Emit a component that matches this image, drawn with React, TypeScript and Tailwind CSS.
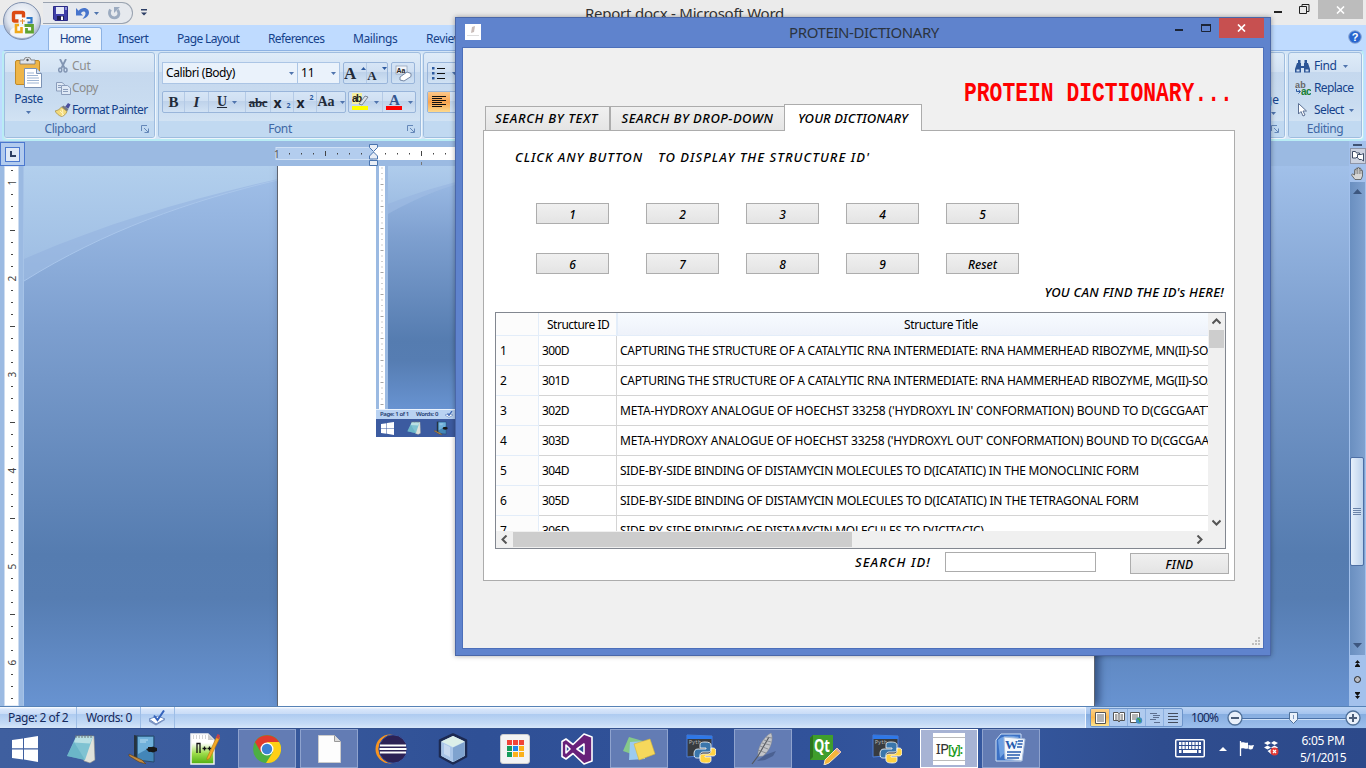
import React from "react";

type Kids = { children?: React.ReactNode };

const rows: [string, string, string][] = [
  ["300D", "CAPTURING THE STRUCTURE OF A CATALYTIC RNA INTERMEDIATE: RNA HAMMERHEAD RIBOZYME, MN(II)-SOAKED", "tracking-[-0.26px]"],
  ["301D", "CAPTURING THE STRUCTURE OF A CATALYTIC RNA INTERMEDIATE: RNA HAMMERHEAD RIBOZYME, MG(II)-SOAKED", "tracking-[-0.26px]"],
  ["302D", "META-HYDROXY ANALOGUE OF HOECHST 33258 ('HYDROXYL IN' CONFORMATION) BOUND TO D(CGCGAATTCGCG)2", "tracking-[-0.14px]"],
  ["303D", "META-HYDROXY ANALOGUE OF HOECHST 33258 ('HYDROXYL OUT' CONFORMATION) BOUND TO D(CGCGAATTCGCG)2", "tracking-[-0.17px]"],
  ["304D", "SIDE-BY-SIDE BINDING OF DISTAMYCIN MOLECULES TO D(ICATATIC) IN THE MONOCLINIC FORM", "tracking-[-0.272px]"],
  ["305D", "SIDE-BY-SIDE BINDING OF DISTAMYCIN MOLECULES TO D(ICATATIC) IN THE TETRAGONAL FORM", "tracking-[-0.26px]"],
  ["306D", "SIDE-BY-SIDE BINDING OF DISTAMYCIN MOLECULES TO D(ICITACIC)", "tracking-[-0.29px]"],
];

/* ---------- small glyphs ---------- */

const Down = ({ cls = "" }: { cls?: string }) => (
  <svg className={`shrink-0 ${cls}`} width="5" height="3" viewBox="0 0 5 3"><path d="M0 0h5L2.5 3z" fill="#4f74ad" /></svg>
);

const Launcher = () => (
  <svg width="8" height="8" viewBox="0 0 8 8" fill="none" stroke="#6487b8"><path d="M.5 6V.5H6" /><path d="M3 3l4 4M7.5 3.5v4h-4" /></svg>
);

const OfficeOrb = () => (
  <svg width="40" height="40" viewBox="0 0 40 40">
    <defs>
      <radialGradient id="orb" cx="50%" cy="40%" r="60%"><stop offset="0" stopColor="#fff" /><stop offset=".65" stopColor="#dfe5ef" /><stop offset="1" stopColor="#9aa9c4" /></radialGradient>
    </defs>
    <circle cx="20" cy="20" r="18.5" fill="url(#orb)" stroke="#7f90ae" />
    <ellipse cx="20" cy="31" rx="12" ry="6" fill="#fff" opacity=".8" />
    <path d="M13 11.500h7.500a1 1 0 0 1 1 1v4M13 11.500a1.500 1.500 0 0 0-1.500 1.500v6a1 1 0 0 0 1 1h4" fill="none" stroke="#dc4a14" strokeWidth="3.400" />
    <path d="M24.500 17h5v4.500h-4" fill="none" stroke="#2f78c8" strokeWidth="2.200" />
    <path d="M17 24h-3v7h5.500v-5" fill="none" stroke="#f0a81a" strokeWidth="2.600" />
    <path d="M22.500 24.500h8v6.500h-6v-4" fill="none" stroke="#5fa330" strokeWidth="2.800" />
    <path d="M18 20h5M20.500 18v5" stroke="#e98a2a" strokeWidth="1" />
  </svg>
);

const Save = () => (
  <svg width="15" height="15" viewBox="0 0 15 15"><path d="M.5.5h14v14H2L.5 13z" fill="#3f3fa8" stroke="#2b2b86" /><path d="M3 1h8v7H3z" fill="#e4e8f6" /><path d="M12 1h2v3h-2z" fill="#8d91d8" /><path d="M4 10h7v4H4z" fill="#1d1d4e" /><path d="M8 10.500h2V14H8z" fill="#fff" /></svg>
);
const Undo = () => (
  <svg width="13" height="13" viewBox="0 0 13 13"><path d="M0 1v7.500h7L4.800 6.200C6.500 4 9.500 4 9.500 6.500 9.500 8.500 8 10 6.500 12c4-1 6.500-3.500 6.500-6.500C13 .5 6-.5 2.600 3.700z" fill="#4674cc" /></svg>
);
const Redo = () => (
  <svg width="13" height="13" viewBox="0 0 13 13"><path d="M2.500 2.500C0 7 2.500 10.800 6.500 10.800c4.500 0 5.500-4.800 3-8" fill="none" stroke="#9cabc0" strokeWidth="2.800" /><path d="M6 6V0h6z" fill="#9cabc0" /></svg>
);
const Paste = () => (
  <svg width="27" height="31" viewBox="0 0 27 31"><rect x=".5" y="3.500" width="24" height="24" rx="1.500" fill="#eeb548" stroke="#c18a26" /><path d="M5 3h4a3.500 2.800 0 0 1 7 0h4v4H5z" fill="#dfe3ea" stroke="#777" strokeWidth=".8" /><circle cx="12.500" cy="3" r="1.200" fill="#555" /><path d="M9.500 11.500h12l5 5v14h-17z" fill="#fff" stroke="#7c93b5" /><path d="M21.500 11.500v5h5" fill="#d8e4f3" stroke="#7c93b5" /><path d="M12 16h7M12 18.500h11M12 21h12M12 23.500h12M12 26h12" stroke="#9db4d3" /></svg>
);
const Cut = () => (
  <svg width="10" height="14" viewBox="0 0 10 14" fill="none" stroke="#8295b3"><path d="M2 0l4.500 9M8 0L3.500 9" strokeWidth="1.800" /><ellipse cx="2.200" cy="11" rx="1.500" ry="2" strokeWidth="1.500" /><ellipse cx="7.500" cy="11" rx="1.500" ry="2" strokeWidth="1.500" /></svg>
);
const Copy = () => (
  <svg width="15" height="13" viewBox="0 0 15 13" fill="#dfe9f6" stroke="#8b9dbb"><path d="M.5.5H6l2.500 2V9h-8z" /><path d="M5.500 3.500h6l3 2.500v6.500h-9z" /><path d="M2 3.500h3M2 5.500h3M7 7.500h5M7 9.500h5" /></svg>
);
const Painter = () => (
  <svg width="16" height="14" viewBox="0 0 16 14"><path d="M10 4l3-4 2.500 1.500-2 4z" fill="#4a4f9e" /><path d="M6.500 4l2-1.500 5 3.500-1.500 2.500z" fill="#777b84" /><path d="M0 8c3-.5 5-2 6.500-4l5.500 4.500C11 11 9 13 6.500 13.500 3.500 12.500 1.500 10.500 0 8z" fill="#f3da7b" stroke="#a3893c" strokeWidth=".7" /><path d="M7 6c1 3 1 5 0 7M5 8l4 4" stroke="#fff4c0" fill="none" /></svg>
);

/* ---------- ribbon ---------- */

const Group = ({ label, cls, launcher, children }: Kids & { label: string; cls: string; launcher?: boolean }) => (
  <div className={`flex shrink-0 flex-col overflow-hidden rounded-[3px] border border-[#9fbddf] bg-[linear-gradient(180deg,#deebf8_0%,#d3e2f3_22%,#c5d8ee_23%,#c9dcf0_60%,#d9e8f6_100%)] shadow-[1px_1px_0_#eef5fc] ${cls}`}>
    <div className="h-[68px] shrink-0">{children}</div>
    <div className="flex h-4 items-center justify-center bg-[#c1d9f1] pr-[5px]">
      <span className={`flex-1 text-center text-[12px] leading-4 tracking-[-0.4px] text-[#4068a5] ${launcher ? "pr-[6px]" : "pl-[5px]"}`}>{label}</span>
      {launcher && <Launcher />}
    </div>
  </div>
);

const Bar = ({ cls, children }: Kids & { cls: string }) => (
  <div className={`flex h-[22px] overflow-hidden rounded-[2px] border border-[#99b5da] bg-[linear-gradient(180deg,#d6e5f6_0%,#cfdff2_45%,#bed2ea_46%,#d1e2f4_100%)] ${cls}`}>{children}</div>
);
const Cell = ({ cls = "", children }: Kids & { cls?: string }) => (
  <div className={`flex items-center justify-center gap-[5px] border-r border-[#b4cae6] last:border-r-0 ${cls}`}>{children}</div>
);
const Serif = ({ cls, children }: Kids & { cls: string }) => (
  <span className={`font-['Liberation_Serif',serif] font-bold leading-none text-[#222b3a] ${cls}`}>{children}</span>
);

const Ribbon = () => (
  <div className="mx-[2px] flex h-[91px] shrink-0 rounded-[4px] border-2 border-t border-[#b9ecf4] border-t-[#8db2e3] bg-[#d3e5f6] pl-0 pt-[1px]">
    <Group label="Clipboard" cls="h-[86px] w-[151px]" launcher>
      <div className="flex">
        <div className="flex w-[46px] flex-col items-center pt-1 pl-px text-[#15428b]">
          <Paste />
          <span className="mt-[3px] text-[12px] leading-4 tracking-[-0.5px]">Paste</span>
          <Down cls="mt-[4px]" />
        </div>
        <div className="flex flex-col pl-[3px] pt-[2px] text-[12px] leading-[22px]">
          <div className="flex items-center tracking-[-0.3px] text-[#8d8d8d]"><span className="flex w-[18px] justify-center"><Cut /></span>Cut</div>
          <div className="flex items-center tracking-[-0.6px] text-[#8d8d8d]"><span className="flex w-[18px] justify-center"><Copy /></span>Copy</div>
          <div className="flex items-center tracking-[-0.64px] text-[#15428b]"><span className="flex w-[18px] justify-center"><Painter /></span>Format Painter</div>
        </div>
      </div>
    </Group>
    <Group label="Font" cls="ml-[3px] h-[86px] w-[263px]" launcher>
      <div className="flex pl-[3px] pt-[9px]">
        <div className="flex h-[22px] w-[136px] items-center justify-between border border-[#abc5e5] bg-[#eaf2fb] px-[3px] text-[12px] tracking-[-0.42px] text-black">Calibri (Body)<Down /></div>
        <div className="flex h-[22px] w-[42px] items-center justify-between border border-l-0 border-[#abc5e5] bg-[#eaf2fb] px-[3px] text-[12px] text-black">11<Down /></div>
        <Bar cls="ml-[3px] w-[45px]">
          <Cell cls="w-[23px] gap-0"><Serif cls="text-[17px]">A</Serif><svg width="5" height="12"><path d="M0 3h5L2.500 0z" fill="#2d5aa0" /></svg></Cell>
          <Cell cls="flex-1 gap-[1px]"><Serif cls="pt-1 text-[13px]">A</Serif><svg width="5" height="12"><path d="M0 0h5L2.500 3z" fill="#2d5aa0" /></svg></Cell>
        </Bar>
        <Bar cls="ml-[3px] w-[24px]">
          <Cell cls="w-full"><svg width="17" height="17" viewBox="0 0 17 17"><rect x="1" y="1" width="11" height="8" fill="#f2f5fa" stroke="#8a9ab3" strokeWidth=".7" /><text x="1.500" y="7.500" fontSize="7" fontWeight="bold" fill="#222" fontFamily="Liberation Sans">Aa</text><path d="M5 12l7-5 4 1.500v3L9 16l-4-1z" fill="#fff" stroke="#7587a4" /></svg></Cell>
        </Bar>
      </div>
      <div className="flex pl-[3px] pt-[7px]">
        <Bar cls="w-[184px]">
          <Cell cls="w-[22px]"><Serif cls="text-[15px]">B</Serif></Cell>
          <Cell cls="w-[24px]"><Serif cls="text-[15px] italic">I</Serif></Cell>
          <Cell cls="w-[37px] gap-2"><Serif cls="text-[14px] underline">U</Serif><Down /></Cell>
          <Cell cls="w-[25px]"><Serif cls="text-[13px] tracking-[-0.3px] line-through">abc</Serif></Cell>
          <Cell cls="w-[23px] gap-0"><span className="text-[14px] font-bold text-[#1c2430]">x</span><span className="pt-[9px] text-[7px] font-bold text-[#2d5aa0]">2</span></Cell>
          <Cell cls="w-[23px] gap-0"><span className="text-[14px] font-bold text-[#1c2430]">x</span><span className="pb-2 text-[7px] font-bold text-[#2d5aa0]">2</span></Cell>
          <Cell cls="flex-1 gap-[2px]"><Serif cls="text-[14px]">Aa</Serif><Down /></Cell>
        </Bar>
        <Bar cls="ml-[2px] w-[68px]">
          <Cell cls="w-[34px]"><svg width="17" height="18" viewBox="0 0 17 18"><rect width="10" height="11" fill="#f5f0a0" /><text x="0" y="9" fontSize="10" fontWeight="bold" fill="#222" fontFamily="Liberation Sans" textLength="10">ab</text><path d="M7 11l6-8 3 1-6 8z" fill="#dfe3ea" stroke="#66727f" strokeWidth=".8" /><rect y="13" width="16" height="4" fill="#ff0" /></svg><Down /></Cell>
          <Cell cls="flex-1"><svg width="17" height="18" viewBox="0 0 17 18"><text x="3" y="12" fontSize="15" fontWeight="bold" fill="#33568f" fontFamily="Liberation Serif">A</text><rect y="13" width="16" height="4" fill="#f00" /></svg><Down /></Cell>
        </Bar>
      </div>
    </Group>
    <Group label="Paragraph" cls="ml-[2px] h-[86px] w-[240px]">
      <div className="flex pl-[3px] pt-[9px]">
        <Bar cls="w-[120px]">
          <Cell cls="gap-[7px] px-1">
            <svg width="13" height="13" viewBox="0 0 13 13"><path d="M0 0h2.500v2.500H0zM0 5h2.500v2.500H0zM0 10h2.500v2.500H0z" fill="#2d5aa0" /><path d="M5 1.500h8M5 6.500h8M5 11.500h8" stroke="#111" /></svg><Down />
          </Cell>
        </Bar>
      </div>
      <div className="flex pl-[3px] pt-[7px]">
        <Bar cls="w-[120px]">
          <Cell cls="w-[22px] bg-[linear-gradient(180deg,#fbc78a,#f9a44f_50%,#fdd98c)]"><svg width="14" height="12" viewBox="0 0 14 12"><path d="M0 .5h14M0 2.500h10M0 4.500h14M0 6.500h10M0 8.500h14M0 10.500h10" stroke="#111" /></svg></Cell>
        </Bar>
      </div>
    </Group>
    <div className="flex-1" />
    <Group label="" cls="h-[86px] w-[60px]" launcher>
      <div className="flex flex-col items-end pr-[5px] pt-[39px] text-[12px] leading-4 text-[#15428b]">
        ge
        <Down cls="mt-1 mr-[3px]" />
      </div>
    </Group>
    <Group label="Editing" cls="ml-[3px] h-[86px] w-[74px]">
      <div className="flex flex-col pl-[6px] pt-[2px] text-[12px] leading-[22px] text-[#15428b]">
        <div className="flex items-center tracking-[-0.4px]"><span className="w-[19px]"><svg width="15" height="14" viewBox="0 0 15 14"><path d="M3 1h2.500v3H3zM9.500 1H12v3H9.500zM2 4h4v3h3V4h4l2 6v3.500H9V9H6v4.500H0V10z" fill="#2c5596" /><path d="M1.500 10.500h3v2h-3zM10.500 10.500h3v2h-3z" fill="#cbdcf2" /></svg></span>Find<Down cls="ml-[6px]" /></div>
        <div className="flex items-center tracking-[-0.65px]"><span className="w-[19px]"><svg width="16" height="15" viewBox="0 0 16 15"><text x="0" y="6.500" fontSize="9" fontWeight="bold" fill="#666" fontFamily="Liberation Sans" textLength="10">ab</text><text x="6" y="13.500" fontSize="10" fontWeight="bold" fill="#187f32" fontFamily="Liberation Sans" textLength="10">ac</text><path d="M1.500 8v2.500H5M3.500 9l2 1.500-2 2" stroke="#2d5aa0" fill="none" /></svg></span>Replace</div>
        <div className="flex items-center tracking-[-0.6px]"><span className="flex w-[19px] pl-[3px]"><svg width="9" height="14" viewBox="0 0 9 14"><path d="M.5.5v10.500L3 8.500l2 4.500 2-1-2-4h3.500z" fill="#fff" stroke="#5c7093" /></svg></span>Select<Down cls="ml-[5px]" /></div>
      </div>
    </Group>
  </div>
);

/* ---------- rulers ---------- */

const VRuler = () => (
  <svg width="24" height="540" viewBox="0 0 24 540">
    <rect width="24" height="540" fill="#9bbae2" /><rect x="4.500" width="14" height="540" fill="#fff" stroke="#cddcf0" /><rect x="23" width="1" height="540" fill="#a6c3e7" />
    {Array.from({ length: 45 }, (_, i) => {
      const y = 4.5 + i * 12, k = i - 1;
      if (k % 8 === 0) return <text key={i} x="12" y={y} fontSize="10" fill="#444" textAnchor="middle" fontFamily="Noto Sans" transform={`rotate(-90 12 ${y}) translate(0 3.800)`}>{k / 8 + 1}</text>;
      const half = k > 0 && k % 8 === 4;
      return <path key={i} d={half ? `M10 ${y}h5` : `M11 ${y}h2`} stroke="#444" />;
    })}
  </svg>
);

const HRuler = () => (
  <svg width="1100" height="26" viewBox="1 0 1100 26" className="shrink-0">
    <rect x="252" y="6.500" width="97" height="12" fill="#b3cdee" stroke="#cfe0f5" />
    <rect x="349" y="6" width="751" height="13" fill="#fff" />
    <text x="250" y="17" fontSize="10" fill="#555" fontFamily="Noto Sans">1</text>
    {Array.from({ length: 15 }, (_, i) => {
      const x = 265.5 + i * 12, k = i - 7;
      if (k === 0) return null;
      return <path key={i} d={(k + 8) % 8 === 4 ? `M${x} 10v5` : `M${x} 12v1.500`} stroke="#444" />;
    })}
    <path d="M397.500 21v3" stroke="#777" />
    <path d="M345.500 3.500h8v3l-4 4-4-4zM345.500 18v-3l4-4 4 4v3zM345.500 19.500h8v5h-8z" fill="#e9eef6" stroke="#4a74ae" />
  </svg>
);

/* ---------- document backdrop ---------- */

const Backdrop = () => (
  <svg className="absolute inset-0" width="1325" height="540" viewBox="0 0 1325 540" preserveAspectRatio="none">
    <defs>
      <linearGradient id="bd" x1="0" y1="0" x2="0" y2="1"><stop offset="0" stopColor="#a1c0e9" /><stop offset=".3" stopColor="#7d9fcf" /><stop offset=".72" stopColor="#557cb0" /><stop offset=".8" stopColor="#567db2" /><stop offset="1" stopColor="#6893d1" /></linearGradient>
      <linearGradient id="bl" x1="0" y1="0" x2="0" y2="1"><stop offset="0" stopColor="#b2cfed" /><stop offset="1" stopColor="#a0bfe4" /></linearGradient>
    </defs>
    <rect width="1325" height="540" fill="url(#bd)" />
    <path d="M0 115C80 65 165 35 254 14L600 0H0z" fill="#a3c0e5" opacity=".55" />
    <path d="M0 115C80 65 165 35 254 14" stroke="#a9c6eb" fill="none" />
    <path d="M0 93C80 58 165 33 254 13L600 0H0z" fill="url(#bl)" />
  </svg>
);

const Start = ({ size }: { size: number }) => (
  <svg width={size} height={size} viewBox="0 0 26 26" fill="#fff"><path d="M0 4l11-1.600V12.300H0zM12 2.200L26 0v12.300H12zM0 13.400h11v10L0 22zM12 13.400h14V26L12 23.600z" /></svg>
);
const Notepad = ({ size }: { size: number }) => (
  <svg width={size} height={size} viewBox="0 0 30 30"><path d="M11 2h17l1 24-5 3-6-2z" fill="#dfe2da" stroke="#888" strokeWidth=".6" /><path d="M10 2.500h17L19 26 1 22z" fill="#7fc3d2" /><path d="M10 2.500h17l-3 7-16-1z" fill="#b9e0e4" /><path d="M8 8l-7 14 18 4z" fill="#5eadc2" opacity=".6" /><path d="M10 1v3M13 1v3M16 1v3M19 1v3M22 1v3M25 1v3" stroke="#6c7478" /></svg>
);
const Journal = ({ size }: { size: number }) => (
  <svg width={size} height={size} viewBox="0 0 30 30"><path d="M6 1l5 1v26l-5-5z" fill="#26333f" /><path d="M9 2l17 0v26l-17-2z" fill="#4386b8" stroke="#24435c" strokeWidth=".8" /><path d="M10 3h15v9L10 20z" fill="#6fb0da" /><path d="M12 6h8M12 8h6" stroke="#b9dcf0" /><path d="M18 15l8-2.500v4L21 18z" fill="#181818" /><path d="M20 13h6l3 1v3l-4 1.500-5-1.500z" fill="#181818" /><path d="M1 20l13 6 4 4-7-2-10-6z" fill="#c28b3f" stroke="#5e3d15" strokeWidth=".6" /></svg>
);

const Page = () => (
  <div className="ml-[253px] h-full w-[818px] border-x border-[#5e6470] bg-white shadow-[4px_0_8px_rgba(20,40,80,0.6)]">
    <div className="ml-[98px] flex h-[271px] w-[480px] flex-col overflow-hidden">
      <div className="relative flex h-[243px] shrink-0 overflow-hidden">
        <svg width="12" height="243" viewBox="0 0 12 243" className="relative z-10 shrink-0"><rect width="12" height="243" fill="#9bbae2" /><rect x="3" width="6" height="243" fill="#fff" />{Array.from({ length: 44 }, (_, i) => <path key={i} d={i % 4 === 3 ? `M4.500 ${2 + i * 5.5}h3` : `M5 ${2 + i * 5.5}h2`} stroke={i % 4 === 3 ? "#a5a5a5" : "#cfcfcf"} />)}</svg>
        <svg width="468" height="243" viewBox="0 0 468 243"><rect width="468" height="243" fill="url(#bd)" /><path d="M0 48C30 31 55 22 80 15L300 0H0z" fill="#a3c0e5" opacity=".5" /><path d="M0 38C30 26 55 19 80 13L300 0H0z" fill="url(#bl)" opacity=".8" /></svg>
      </div>
      <div className="flex h-[10px] shrink-0 items-center gap-[7px] border-t border-[#eaf2fc] bg-[#b9d2f2] pl-[4px] text-[6px] font-semibold leading-[9px] tracking-[-0.4px] text-[#1f3c70]"><span className="w-[29px] whitespace-nowrap">Page: 1 of 1</span><span className="w-[22px] whitespace-nowrap">Words: 0</span><svg width="8" height="7" viewBox="0 0 16 14"><path d="M0 8l8-3 8 3-8 5z" fill="#fff" stroke="#4971b5" /><path d="M5 5l3 4 6-9" stroke="#3c66b5" strokeWidth="2.500" fill="none" /></svg></div>
      <div className="flex flex-1 items-center gap-[13px] bg-[#3c5ba0] pl-[5px]"><Start size={13} /><Notepad size={14} /><Journal size={14} /></div>
    </div>
  </div>
);

const ScrollColumn = () => (
  <div className="flex w-[17px] shrink-0 flex-col items-center bg-[#a3c1ec]">
    <div className="mt-[3px] h-[2px] w-[9px] bg-[#3f5273]" />
    <div className="mt-[2px] flex h-[16px] w-[16px] items-center justify-center border border-[#8e95a8] bg-[#ccd2e0]"><svg width="12" height="12" viewBox="0 0 12 12"><path d="M.5 1.500h3l1 1.500h3v4H5L4 8H.5z" fill="#fff" stroke="#3f4c66" /><path d="M5.500 4.500h4l2-1v7.500l-2-1.500H7l-1.500-2z" fill="#fff" stroke="#3f4c66" /></svg></div>
    <svg className="mt-[3px]" width="14" height="13" viewBox="0 0 14 13"><path d="M4 12.500L.5 8l1-1.200L3.500 8V3.200a.7.7 0 0 1 1.500 0V2a.8.8 0 0 1 1.600 0V1.200a.8.8 0 0 1 1.700 0V2a.8.8 0 0 1 1.600 0v2a.7.7 0 0 1 1.600 0V9l-1.500 3.500z" fill="#d6d6d6" stroke="#555" strokeWidth=".8" /><path d="M5 3v4M6.600 2v5M8.300 2v5M9.900 4v3" stroke="#777" strokeWidth=".7" /></svg>
    <div className="mt-[2px] flex w-[15px] flex-1 flex-col items-center justify-between bg-[linear-gradient(90deg,#6a8fc0,#7fa1cf)]">
      <svg className="mt-[7px]" width="9" height="5"><path d="M0 5h9L4.500 0z" fill="#3d577f" /></svg>
      <svg className="mb-[7px]" width="9" height="5"><path d="M0 0h9L4.500 5z" fill="#3d577f" /></svg>
    </div>
    <div className="flex h-[51px] flex-col items-center gap-[9px] pt-[5px]">
      <svg width="7" height="7"><path d="M3.500 0L6 3H1zM3.500 3L6 6H1zM1 6h5v1H1z" fill="#111" /></svg>
      <svg width="7" height="7"><circle cx="3.500" cy="3.500" r="3" fill="#b9bcc4" stroke="#222" /></svg>
      <svg width="7" height="7"><path d="M3.500 7L6 4H1zM3.500 4L6 1H1zM1 0h5v1H1z" fill="#111" /></svg>
    </div>
  </div>
);

/* ---------- status bar ---------- */

const StatusBar = () => (
  <div className="flex h-[22px] shrink-0 items-stretch border-t border-[#5782b6] bg-[linear-gradient(180deg,#fff_0%,#d8e6fa_10%,#c9dcf7_33%,#aecbf0_34%,#c5dbf6_80%,#d7e6f9_100%)] text-[12px] leading-[21px] text-[#15295c]">
    <div className="w-[77px] border-r border-[#9dbde6] pl-2 tracking-[-0.48px]">Page: 2 of 2</div>
    <div className="w-[64px] border-r border-[#9dbde6] pl-[9px] tracking-[-0.4px]">Words: 0</div>
    <div className="flex w-[34px] items-center justify-center border-r border-[#9dbde6]"><svg width="17" height="16" viewBox="0 0 17 16"><path d="M0 9l9-3 7 3-9 5z" fill="#fff" stroke="#6c8cc4" /><path d="M0 9.500v2l7 4 9-5.500v-1L7 14z" fill="#7d94c0" /><path d="M5 5.500L8.500 10 15 .5" stroke="#3563bc" strokeWidth="2" fill="none" /></svg></div>
    <div className="flex-1" />
    <div className="flex w-[281px] items-center border-l border-[#f0f6fe] bg-[linear-gradient(180deg,#bcd4f4_0%,#a4c3ee_34%,#86ade0_35%,#9dbfec_100%)] pl-[4px]">
      <div className="flex h-[19px] w-[93px] overflow-hidden rounded-[2px] border border-[#6d94ca] bg-[#b0cbef]">
        <div className="flex w-[18px] items-center justify-center bg-[linear-gradient(180deg,#fbd08a,#fdb94c_50%,#fee48e)]"><svg width="11" height="12" viewBox="0 0 11 12"><path d="M.5.5h10v11H.5z" fill="#fff" stroke="#555" /><path d="M2 3h7M2 5h7M2 7h7M2 9h7" stroke="#666" /></svg></div>
        <div className="flex w-[18px] items-center justify-center border-l border-[#8db0df]"><svg width="12" height="11" viewBox="0 0 12 11"><path d="M.5.5H5l1 1 1-1h4.500v8H7l-1 1.500-1-1.500H.5z" fill="#fff" stroke="#555" /><path d="M6 1v9M2 3h2.500M2 5h2.500M2 7h2.500M7.500 3H10M7.500 5H10M7.500 7H10" stroke="#555" /></svg></div>
        <div className="flex w-[18px] items-center justify-center border-l border-[#8db0df]"><svg width="13" height="12" viewBox="0 0 13 12"><path d="M.5.5h9v10h-9z" fill="#fff" stroke="#555" /><path d="M2 3h6M2 5h6M2 7h4" stroke="#666" /><circle cx="9" cy="8.500" r="3.200" fill="#3f8fc4" /><path d="M7 7c2-1 3 1 3 3" stroke="#3fa04a" strokeWidth="1.500" fill="none" /></svg></div>
        <div className="flex w-[18px] items-center justify-center border-l border-[#8db0df]"><svg width="10" height="10" viewBox="0 0 10 10"><path d="M0 .5h7M3 2.500h7M3 4.500h6M0 6.500h6M4 9.500h6" stroke="#5d6f90" /></svg></div>
        <div className="flex flex-1 items-center justify-center border-l border-[#8db0df]"><svg width="10" height="10" viewBox="0 0 10 10"><path d="M0 .5h10M0 3.500h10M0 6.500h10M0 9.500h10" stroke="#444c5c" /></svg></div>
      </div>
      <span className="w-[35px] pl-[8px] tracking-[-0.85px]">100%</span>
      <svg className="ml-[8px] shrink-0" width="136" height="18" viewBox="0 0 136 18">
        <path d="M16 9.500h104" stroke="#4a71a8" /><path d="M16 10.500h104" stroke="#cde0f8" />
        <path d="M68.500 5.500v8" stroke="#4a71a8" />
        <circle cx="9" cy="9" r="7" fill="#e9f0fa" stroke="#4f7099" strokeWidth="1.300" /><path d="M5 9h8" stroke="#4b5d78" strokeWidth="2" />
        <path d="M63.500 3.500h8v7l-4 4-4-4z" fill="#e9f0fa" stroke="#4f7099" /><path d="M67.500 6v4" stroke="#7e97bd" />
        <circle cx="127" cy="9" r="7" fill="#e9f0fa" stroke="#4f7099" strokeWidth="1.300" /><path d="M123 9h8M127 5v8" stroke="#4b5d78" strokeWidth="2" />
      </svg>
    </div>
  </div>
);

/* ---------- taskbar ---------- */

const Notepp = () => (
  <svg width="30" height="32" viewBox="0 0 30 32"><defs><linearGradient id="npp" x1="0" y1="0" x2="0" y2="1"><stop offset=".3" stopColor="#fff" /><stop offset=".65" stopColor="#9ddc4a" /><stop offset="1" stopColor="#4fae10" /></linearGradient></defs><path d="M1 1h17l6 6v24H1z" fill="url(#npp)" stroke="#f4f4f4" strokeWidth="1.500" /><path d="M3 3h15M3 5h15" stroke="#aaa" strokeDasharray="1 2" /><path d="M18 1l6 6h-6z" fill="#ccc" /><path d="M7 20V10.500h3V20M12.500 15.500h4M14.500 13.500v4M17.500 15.500h4M19.500 13.500v4" stroke="#111" fill="none" strokeWidth="1.300" /><path d="M17 25l10-22 3 1.500L20 25l-3 2z" fill="#f2ab27" stroke="#b56f10" strokeWidth=".6" /><path d="M26 5l1.500-4L30 2l-1 4z" fill="#c2424c" /></svg>
);
const Chrome = () => (
  <svg width="28" height="28" viewBox="0 0 28 28"><circle cx="14" cy="14" r="14" fill="#4caf43" /><path d="M14 14L2 7A14 14 0 0 1 26.100 7z" fill="#e03a2c" /><path d="M14 7h12.100A14 14 0 0 1 13 28l7-11z" fill="#fdcf16" /><path d="M2 7l6 10.500L14 7z" fill="#e03a2c" /><circle cx="14" cy="14" r="6.500" fill="#fff" /><circle cx="14" cy="14" r="5.200" fill="#3c82d4" /></svg>
);
const File = () => (<svg width="23" height="28" viewBox="0 0 23 28"><path d="M.5.5h16l6 6v21H.5z" fill="#fdfdfd" stroke="#ccc" /><path d="M16.500.5v6h6" fill="#ddd" stroke="#999" /></svg>);
const Eclipse = () => (<svg width="32" height="30" viewBox="0 0 32 30"><circle cx="15" cy="15" r="14.500" fill="#f79420" /><circle cx="18" cy="15" r="14.200" fill="#2c2255" stroke="#3a56a0" /><path d="M5 11.500h26M4.500 15h27M5 18.500h26" stroke="#fff" strokeWidth="2.200" /></svg>);
const Cube = () => (<svg width="30" height="32" viewBox="0 0 30 32"><path d="M15 1.500l13 6v16l-13 7-13-7v-16z" fill="#c9dff0" stroke="#1c2a52" strokeWidth="2.500" strokeLinejoin="round" /><path d="M15 3l11.500 5.500L15 14 3.500 8.500z" fill="#dcefe9" /><path d="M3.500 9L15 14.500V29L3.500 23z" fill="#a9c5e8" /><path d="M26.500 9L15 14.500V29l11.500-6z" fill="#7fa3cf" /><path d="M6 11l6 3v10l-6-3z" fill="#fff" opacity=".35" /></svg>);
const Apps = () => (
  <div className="grid h-[30px] w-[30px] grid-cols-[5px_5px_5px] content-center justify-center gap-[1px] rounded-[3px] border border-[#ccc] bg-[#f3f3f3]">
    <i className="size-[5px] bg-[#f04438]" /><i className="size-[5px] bg-[#f04438]" /><i className="size-[5px] bg-[#f04438]" />
    <i className="size-[5px] bg-[#169c5b]" /><i className="size-[5px] bg-[#1d86ea]" /><i className="size-[5px] bg-[#fbb11a]" />
    <i className="size-[5px] bg-[#169c5b]" /><i className="size-[5px] bg-[#fbb11a]" /><i className="size-[5px] bg-[#fbb11a]" />
  </div>
);
const VS = () => (<svg width="32" height="32" viewBox="0 0 32 32"><path fillRule="evenodd" d="M23 1l8 3v24l-8 3L12 20.500 5 26l-4-2.500v-15L5 6l7 5.500zM23 11l-7 5 7 5zM5 12v8l4-4z" fill="#68217a" stroke="#fff" strokeWidth="1.600" strokeLinejoin="round" /></svg>);
const Sticky = () => (<svg width="34" height="26" viewBox="0 0 34 26"><path d="M7 1l14 4-6 15L1 15z" fill="#86c98a" /><path d="M8 6l15-1v18l-16 1z" fill="#9ccbf0" /><path d="M12 8l16-5 5 15-16 6z" fill="#f5d85c" stroke="#d6b537" strokeWidth=".6" /></svg>);
const Python = () => (
  <svg width="30" height="30" viewBox="0 0 30 30"><path d="M1 1l25 1v19L1 23z" fill="#383b3f" stroke="#4d7fd6" /><path d="M1 1l25 1v3L1 5z" fill="#2f78e8" /><text x="3" y="10" fontSize="5" fill="#bbb" fontFamily="Liberation Mono">Pyth</text><path d="M19 8c-4 0-5 1-5 3v3h6v1h-8c-3 0-4 2-4 5s1 4 3 4h3v-3c0-2 1.500-3 3-3h5c2 0 3-1 3-3v-4c0-2-2-3-6-3z" fill="#3a76ab" stroke="#fff" strokeWidth=".8" /><path d="M20 29c4 0 5-1 5-3v-3h-6v-1h8c2 0 3-1 3-4s-1-4-3-4h-2v3c0 2-1.500 3-3 3h-5c-2 0-3 1-3 3v3c0 2 2 3 6 3z" fill="#ffd342" stroke="#fff" strokeWidth=".8" /></svg>
);
const Feather = () => (<svg width="28" height="32" viewBox="0 0 28 32"><path d="M8 28l8-6 11-4-3 5-8 4z" fill="#33466f" opacity=".5" /><path d="M22 0c3 5 0 17-8 23l-5 .5C8 16 14 4 22 0z" fill="#c3c5c9" stroke="#85888e" strokeWidth=".5" /><path d="M20 4L9 23 3 31" stroke="#55585e" strokeWidth="1.200" fill="none" /><path d="M11 13l8 3M13 10l8 2M15 7l7 2M9 17l8 3M17 4l6 1" stroke="#7e8187" strokeWidth=".8" /></svg>);
const Qt = () => (<svg width="32" height="32" viewBox="0 0 32 32"><path d="M4 2h20v25H1V5z" fill="#3f9e2c" /><path d="M1 5l3-3v22l-3 3z" fill="#2c751f" /><text x="5" y="19" fontSize="17" fontWeight="bold" fill="#fff" fontFamily="Open Sans" textLength="16" lengthAdjust="spacingAndGlyphs">Qt</text><path d="M16 27L28 15l4 4-12 11-5 2z" fill="#f4b63c" stroke="#f8e7c0" /><path d="M26.500 16.500l4 4 1.500-1.500-4-4z" fill="#d8a3a3" /></svg>);
const IPy = () => (<div className="flex h-[32px] w-[32px] items-center justify-center bg-white shadow-[inset_0_4px_0_#fff,inset_0_5px_0_#bbb,inset_0_-4px_0_#fff,inset_0_-5px_0_#bbb]"><span className="whitespace-nowrap text-[15px] leading-none tracking-[-0.9px] text-[#333]">IP<span className="text-[12px] font-semibold text-[#1c9a1c]">[y]:</span></span></div>);
const WordIcon = () => (<svg width="32" height="31" viewBox="0 0 32 31"><path d="M6 1h20v27H1V7z" fill="#3b70c4" stroke="#cfe0f6" /><path d="M3 7C8 2 16 2 24 4L5 25z" fill="#6ea0e2" /><path d="M9 4l21 2-3 22-17-2z" fill="#f4f8fd" stroke="#a9bfdd" /><text x="10" y="16" fontSize="13" fontWeight="bold" fill="#2559ad" fontFamily="Liberation Serif">W</text><path d="M23 8h5M22.500 11h5M22 14h5M12 19h14M12 22h13M12 25h12" stroke="#2559ad" strokeWidth="1.300" /></svg>);

const Task = ({ state = "none", children }: Kids & { state?: "none" | "open" | "active" }) => (
  <div className={`flex h-[39px] w-[58px] shrink-0 items-center justify-center border ${state === "open" ? "border-[#8fa3ce] bg-[#637cb4]" : state === "active" ? "border-white bg-[#a7b3d4]" : "border-transparent"}`}>{children}</div>
);

const Taskbar = () => (
  <div className="flex h-[40px] shrink-0 items-end gap-1 border-t border-[#33518e] bg-[linear-gradient(90deg,#3f5f9f_0%,#3b5c9e_15%,#2f5096_35%,#31529a_60%,#35589f_73%,#2f4d8f_85%,#2c498a_100%)]">
    <div className="flex h-[39px] w-[48px] items-center justify-center pl-[2px]"><Start size={26} /></div>
    <Task><Notepad size={30} /></Task><Task><Journal size={30} /></Task><Task><Notepp /></Task>
    <Task state="open"><Chrome /></Task><Task state="open"><File /></Task>
    <Task><Eclipse /></Task><Task><Cube /></Task><Task><Apps /></Task><Task><VS /></Task>
    <Task state="open"><Sticky /></Task><Task><Python /></Task><Task state="open"><Feather /></Task>
    <Task><Qt /></Task><Task><Python /></Task><Task state="active"><IPy /></Task><Task state="open"><WordIcon /></Task>
    <div className="flex h-[39px] flex-1 items-center pl-[131px]">
      <svg width="31" height="19" viewBox="0 0 31 19"><rect x=".75" y=".75" width="28.500" height="17" rx="1" fill="none" stroke="#fff" strokeWidth="1.500" /><path d="M4 4.500h22M4 8.500h22" stroke="#fff" strokeWidth="3" strokeDasharray="2.400 .9" /><path d="M4 12.500h2.500M8 12.500h14M23.500 12.500H26" stroke="#fff" strokeWidth="3" /></svg>
      <svg className="ml-[13px]" width="8" height="4"><path d="M0 4h8L4 0z" fill="#fff" /></svg>
      <svg className="ml-[12px]" width="16" height="15" viewBox="0 0 16 15"><path d="M1.500 0v15" stroke="#fff" strokeWidth="1.300" /><path d="M2 1.500c3-1 4 1 7 0v6c-3 1-4-1-7 0z" fill="#fff" /><path d="M9.500 4c2 .5 3 .5 5.500 0L13.500 8c-1 .5-3 .5-4 0z" fill="#fff" /></svg>
      <svg className="ml-[9px]" width="15" height="15" viewBox="0 0 15 15"><path d="M4 0l3 2-3.500 2L0 2zM10 0l4 2-3.500 2L7 2zM3.500 4.500L7 6.500l-3.500 2L0 6.500zM10.500 4.500l3.500 2-3.500 2L7 6.500zM3.500 10L7 8l3.500 2L7 13z" fill="#fff" /><circle cx="10.500" cy="10.500" r="4" fill="#e03a36" /><path d="M9 9l3 3M12 9l-3 3" stroke="#fff" strokeWidth="1.300" /></svg>
      <div className="ml-[19px] flex w-[50px] flex-col items-center text-[12px] leading-[17px] text-white"><span className="tracking-[-0.3px]">6:05 PM</span><span className="tracking-[-0.5px]">5/1/2015</span></div>
    </div>
  </div>
);

/* ---------- protein dictionary window ---------- */

const hand = "font-['Noto_Sans',sans-serif] italic font-medium text-[13px] leading-none text-black whitespace-pre";

const Btn = ({ cls = "w-[73px]", children }: Kids & { cls?: string }) => (
  <button className={`flex h-[21px] shrink-0 items-center justify-center border border-[#adadad] bg-[linear-gradient(180deg,#f0f0f0,#e4e4e4)] pt-[2px] font-['Noto_Sans',sans-serif] text-[12px] font-medium italic leading-none text-black ${cls}`}>{children}</button>
);

const Chevron = ({ d }: { d: string }) => (<svg width="9" height="9" viewBox="0 0 9 9"><path d={d} fill="none" stroke="#555" strokeWidth="2" /></svg>);

const Table = () => (
  <div className="ml-[11px] flex h-[237px] w-[731px] border border-[#828790] bg-[#f0f0f0] text-[12px] text-black">
    <div className="flex w-[712px] shrink-0 flex-col">
      <div className="h-[218px] overflow-hidden bg-white">
        <div className="flex h-[23px] border-b border-[#e3edf9] bg-[#fcfcfc] leading-[23px]">
          <div className="w-[43px] border-r border-[#e3edf9]" />
          <div className="w-[79px] border-r-2 border-[#e3edf9] pl-2 tracking-[-0.5px]">Structure ID</div>
          <div className="flex-1 bg-[linear-gradient(180deg,#f7fbff,#eef2fa)] pl-[56px] text-center tracking-[-0.36px]">Structure Title</div>
        </div>
        {rows.map(([id, title, track], i) => (
          <div key={id} className="flex h-[30px] leading-[29px]">
            <div className="w-[43px] shrink-0 border-b border-r border-[#e3edf9] bg-[#fcfcfc] pl-1">{i + 1}</div>
            <div className="w-[78px] shrink-0 border-b border-r border-[#d4d4d4] pl-[3px] tracking-[-0.6px]">{id}</div>
            <div className={`flex-1 overflow-hidden whitespace-nowrap border-b border-[#d4d4d4] pl-[3px] ${track}`}>{title}</div>
          </div>
        ))}
      </div>
      <div className="mt-[1px] flex h-[15px] items-center">
        <div className="flex w-[17px] justify-center"><Chevron d="M6.500.500l-4 4 4 4" /></div>
        <div className="h-[15px] w-[339px] bg-[#cdcdcd]" />
        <div className="flex flex-1 justify-end pr-[4px]"><Chevron d="M2.500.500l4 4-4 4" /></div>
      </div>
    </div>
    <div className="flex h-[218px] flex-1 flex-col items-center">
      <div className="flex h-[17px] items-center"><Chevron d="M.500 6.500l4-4 4 4" /></div>
      <div className="h-[18px] w-[15px] bg-[#cdcdcd]" />
      <div className="flex flex-1 items-end pb-1"><Chevron d="M.500 2.500l4 4 4-4" /></div>
    </div>
  </div>
);

const ProteinWindow = () => (
  <div className="absolute left-[455px] top-[17px] flex h-[639px] w-[816px] flex-col border border-[#4a67a8] bg-[#5f83cd] shadow-[0_0_5px_rgba(0,0,0,0.35)]">
    <div className="flex h-[29px] shrink-0 items-start pl-[9px] pr-[6px]">
      <div className="mt-[6px] flex size-4 items-center justify-center bg-white"><svg width="14" height="14" viewBox="0 0 14 14"><path d="M6 2l3-1-1 6-3 1z" fill="#c9bcb8" /><path d="M1 10.500h12" stroke="#ddd" /></svg></div>
      <div className="flex-1 pl-[74px] text-center text-[15px] leading-[29px] tracking-[-0.4px] text-[#2b3440]">PROTEIN-DICTIONARY</div>
      <svg className="mt-[5px]" width="40" height="12" viewBox="0 0 40 12"><path d="M2 6h8v2H2z" fill="#1c2436" /><path d="M28.500 1.500h9v7h-9z" fill="none" stroke="#1c2436" /><path d="M28 1h10v2H28z" fill="#1c2436" /></svg>
      <div className="ml-[6px] flex h-[20px] w-[45px] items-center justify-center bg-[#c75050]"><svg width="9" height="8" viewBox="0 0 9 8"><path d="M1 .5l7 7M8 .5l-7 7" stroke="#fff" strokeWidth="1.700" /></svg></div>
    </div>
    <div className="mx-[6px] flex h-[602px] shrink-0 flex-col border border-[#4c6fba] bg-[#f0f0f0]">
      <div className="flex h-[56px] shrink-0 items-end justify-end pr-[26px]">
        <h1 className="w-[273px] origin-left scale-x-[0.79] whitespace-pre text-left font-['Liberation_Mono',monospace] text-[27px] font-bold leading-[20px] text-[#f00]">PROTEIN DICTIONARY...</h1>
      </div>
      <div className="relative z-10 -mb-px ml-[22px] flex h-[27px] shrink-0 items-end">
        <div className={`flex h-[25px] w-[125px] items-center justify-center border border-[#acacac] bg-[linear-gradient(180deg,#f0f0f0,#e5e5e5)] pr-[2px] tracking-[0.65px] ${hand}`}>SEARCH BY TEXT</div>
        <div className={`flex h-[25px] w-[175px] items-center justify-center border border-[#acacac] bg-[linear-gradient(180deg,#f0f0f0,#e5e5e5)] tracking-[0.48px] ${hand}`}>SEARCH BY DROP-DOWN</div>
        <div className={`-ml-px flex h-[27px] w-[138px] items-center justify-center border border-b-0 border-[#acacac] bg-white tracking-[0.1px] ${hand}`}>YOUR DICTIONARY</div>
      </div>
      <div className="ml-[20px] flex h-[451px] w-[752px] shrink-0 flex-col border border-[#acacac] bg-white">
        <div className={`flex gap-[15px] pl-[31px] pt-[20px] ${hand}`}><span className="tracking-[0.94px]">CLICK ANY BUTTON</span><span className="tracking-[1.04px]">TO DISPLAY THE STRUCTURE ID'</span></div>
        <div className="flex gap-[27px] pl-[52px] pt-[39px]"><Btn>1</Btn><span className="-ml-[17px]" /><Btn>2</Btn><Btn>3</Btn><Btn>4</Btn><Btn>5</Btn></div>
        <div className="flex gap-[27px] pl-[52px] pt-[29px]"><Btn>6</Btn><span className="-ml-[17px]" /><Btn>7</Btn><Btn>8</Btn><Btn>9</Btn><Btn>Reset</Btn></div>
        <div className={`flex justify-end pb-[13px] pr-[10px] pt-[12px] tracking-[0.25px] ${hand}`}>YOU CAN FIND THE ID's HERE!</div>
        <Table />
        <div className="flex pt-[3px]">
          <span className={`ml-[371px] mt-[4px] w-[90px] tracking-[1.05px] ${hand}`}>SEARCH ID!</span>
          <input className="h-5 w-[151px] border border-[#acacac] bg-white" />
          <Btn cls="ml-[34px] mt-px w-[99px] tracking-[0.3px]">FIND</Btn>
        </div>
      </div>
      <div className="flex flex-1 items-end justify-end p-[3px]"><svg width="8" height="8"><path d="M6 0h2v2H6zM3 3h2v2H3zM6 3h2v2H6zM0 6h2v2H0zM3 6h2v2H3zM6 6h2v2H6z" fill="#bfbfbf" /></svg></div>
    </div>
  </div>
);

/* ---------- page ---------- */

export default function App() {
  return (
    <div className="relative flex h-[768px] w-[1366px] flex-col overflow-hidden bg-[#bfdbff] font-['Noto_Sans',sans-serif]">
      <div className="flex h-[25px] shrink-0 items-start bg-[#ebebeb]">
        <div className="flex w-[585px] items-start">
          <div className="ml-[43px] mt-[2px] flex h-[22px] w-[90px] items-center rounded-r-full border border-l-0 border-[#9aa3b0] bg-[#e6e9ee] pl-[10px]"><Save /><span className="ml-2"><Undo /></span><Down cls="ml-[5px]" /><span className="ml-[9px]"><Redo /></span></div>
          <svg className="ml-2 mt-[9px]" width="6" height="8"><path d="M0 0h6v1.500H0zM0 3.500h6L3 6.500z" fill="#2d3f66" /></svg>
        </div>
        <div className="h-[25px] flex-1 text-[15px] leading-[27px] tracking-[-0.25px] text-[#333]">Report.docx - Microsoft Word</div>
        <svg className="mt-[4px]" width="40" height="12" viewBox="0 0 40 12"><path d="M0 7h8v2H0z" fill="#222" /><path d="M25.500 2.500h7v7h-7zM28 2V.5h7v7h-2" fill="none" stroke="#222" /></svg>
        <div className="ml-[4px] mr-[3px] flex h-[19px] w-[45px] items-center justify-center bg-[#bcbcbc]"><svg width="9" height="8" viewBox="0 0 9 8"><path d="M1 .5l7 7M8 .5l-7 7" stroke="#fff" strokeWidth="1.600" /></svg></div>
      </div>
      <div className="flex h-[25px] shrink-0 items-end pl-[48px] text-[12px] text-[#15428b]">
        <div className="flex h-[23px] w-[54px] items-center justify-center rounded-t-[3px] border border-b-0 border-[#8db2e3] bg-[#edf4fc] tracking-[-0.9px]">Home</div>
        <div className="ml-[16px] w-[59px] leading-[22px] tracking-[-0.5px]">Insert</div>
        <div className="w-[91px] leading-[22px] tracking-[-0.65px]">Page Layout</div>
        <div className="w-[85px] leading-[22px] tracking-[-0.6px]">References</div>
        <div className="w-[73px] leading-[22px] tracking-[-0.4px]">Mailings</div>
        <div className="flex-1 leading-[22px] tracking-[-0.4px]">Review</div>
        <svg className="mb-[6px] mr-[4px]" width="14" height="14" viewBox="0 0 14 14"><circle cx="7" cy="7" r="6.300" fill="#2765cf" stroke="#8fa9d4" /><text x="7" y="10.800" fontSize="11" fontWeight="bold" fill="#fff" textAnchor="middle" fontFamily="Liberation Sans">?</text></svg>
      </div>
      <Ribbon />
      <div className="flex min-h-0 flex-1">
        <div className="flex min-w-0 flex-1 flex-col">
          <div className="flex h-[25px] shrink-0 overflow-hidden bg-[#9bbae2]">
            <div className="mt-[1px] flex h-[24px] w-[25px] shrink-0 items-center justify-center border border-[#4b78cf] bg-[#b2cbee]"><div className="flex size-[15px] items-center justify-center border border-[#4b78cf] bg-[#dfe9f6]"><svg width="6" height="6"><path d="M1 0v5h5" fill="none" stroke="#2c3f63" strokeWidth="2" /></svg></div></div>
            <HRuler />
          </div>
          <div className="flex min-h-0 flex-1 overflow-hidden">
            <div className="w-[24px] shrink-0"><VRuler /></div>
            <div className="relative flex-1 overflow-hidden"><Backdrop /><div className="relative h-full"><Page /></div></div>
          </div>
        </div>
        <ScrollColumn />
      </div>
      <StatusBar />
      <Taskbar />
      <div className="absolute left-[2px] top-[1px]"><OfficeOrb /></div>
      <div className="absolute left-[1350px] top-[457px] flex h-[109px] w-[14px] items-center justify-center rounded-[2px] border border-[#4d6fa5] bg-[linear-gradient(90deg,#e6f0fb,#bdd2ec)]"><svg width="8" height="8"><path d="M0 .5h8M0 2.500h8M0 4.500h8M0 6.500h8" stroke="#6b83a8" /></svg></div>
      <ProteinWindow />
    </div>
  );
}
